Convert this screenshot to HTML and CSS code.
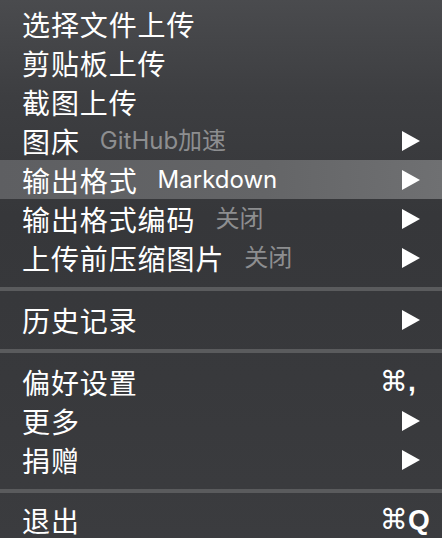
FILE: index.html
```html
<!DOCTYPE html>
<html lang="zh-CN">
<head>
<meta charset="utf-8">
<title>菜单</title>
<link rel="stylesheet" href="styles.css">
</head>
<body>
<div class="menu">
  <div class="item"><span class="label">选择文件上传</span></div>
  <div class="item"><span class="label">剪贴板上传</span></div>
  <div class="item"><span class="label">截图上传</span></div>
  <div class="item">
    <span class="label">图床</span><span class="sub">GitHub加速</span>
    <span class="right"><svg class="arrow" viewBox="0 0 18 20"><polygon points="0,0 18,10 0,20"/></svg></span>
  </div>
  <div class="item active">
    <span class="label">输出格式</span><span class="sub">Markdown</span>
    <span class="right"><svg class="arrow" viewBox="0 0 18 20"><polygon points="0,0 18,10 0,20"/></svg></span>
  </div>
  <div class="item">
    <span class="label">输出格式编码</span><span class="sub">关闭</span>
    <span class="right"><svg class="arrow" viewBox="0 0 18 20"><polygon points="0,0 18,10 0,20"/></svg></span>
  </div>
  <div class="item">
    <span class="label">上传前压缩图片</span><span class="sub">关闭</span>
    <span class="right"><svg class="arrow" viewBox="0 0 18 20"><polygon points="0,0 18,10 0,20"/></svg></span>
  </div>
  <div class="sep"></div>
  <div class="item">
    <span class="label">历史记录</span>
    <span class="right"><svg class="arrow" viewBox="0 0 18 20"><polygon points="0,0 18,10 0,20"/></svg></span>
  </div>
  <div class="sep"></div>
  <div class="item">
    <span class="label">偏好设置</span>
    <span class="right shortcut"><span class="cmd">⌘</span>,</span>
  </div>
  <div class="item">
    <span class="label">更多</span>
    <span class="right"><svg class="arrow" viewBox="0 0 18 20"><polygon points="0,0 18,10 0,20"/></svg></span>
  </div>
  <div class="item">
    <span class="label">捐赠</span>
    <span class="right"><svg class="arrow" viewBox="0 0 18 20"><polygon points="0,0 18,10 0,20"/></svg></span>
  </div>
  <div class="sep"></div>
  <div class="item last">
    <span class="label">退出</span>
    <span class="right shortcut"><span class="cmd">⌘</span>Q</span>
  </div>
</div>
</body>
</html>
```

FILE: styles.css
```css
html, body {
  margin: 0;
  padding: 0;
}

body {
  width: 442px;
  height: 538px;
  overflow: hidden;
  background: linear-gradient(180deg, #4a4b4e 0%, #3d3e41 18%, #36373a 40%, #38393c 70%, #3b3c3f 100%);
  font-family: Inter, "Noto Sans CJK SC", sans-serif;
  color: #ffffff;
}

.menu {
  display: flex;
  flex-direction: column;
  padding-top: 4px;
}

.item {
  display: flex;
  align-items: center;
  height: 39px;
  padding-left: 22px;
  padding-right: 15px;
}

.item.last {
  height: 36px;
}

.item.active {
  background: linear-gradient(90deg, #5e5f62 0%, #646567 60%, #6f7072 100%);
}

.label {
  font-family: "Noto Sans CJK SC", sans-serif;
  font-size: 28px;
  letter-spacing: 0.9px;
  line-height: 1;
  white-space: nowrap;
}

.sub {
  margin-left: 20px;
  font-size: 24px;
  line-height: 1;
  color: #8d8e90;
  white-space: nowrap;
  font-family: Inter, "Noto Sans CJK SC", sans-serif;
}

.item.active .sub {
  color: #ffffff;
}

.right {
  margin-left: auto;
  width: 47px;
  display: flex;
  align-items: center;
  justify-content: flex-end;
}

.arrow {
  width: 18px;
  height: 20px;
  margin-right: 7px;
  fill: #ffffff;
  display: block;
}

.shortcut {
  justify-content: flex-start;
  font-family: "Liberation Sans", sans-serif;
  font-size: 28px;
  font-weight: 700;
  line-height: 1;
}

.cmd {
  font-family: "DejaVu Sans", sans-serif;
  font-weight: 400;
  font-size: 28px;
}

.sep {
  padding: 10px 0 9px;
}

.sep::before {
  content: "";
  display: block;
  height: 4px;
  background: #5a5b5d;
}
```
